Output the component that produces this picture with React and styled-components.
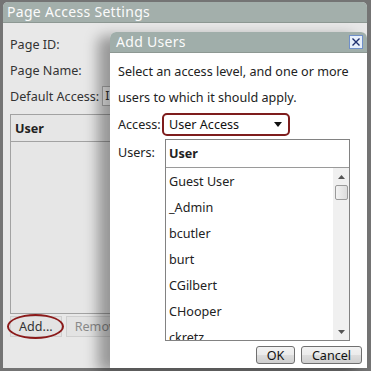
import React from "react";
import styled, { createGlobalStyle } from "styled-components";

const Global = createGlobalStyle`
  html, body { margin: 0; padding: 0; background: #747474; }
  body { font-family: "Noto Sans", "Open Sans", sans-serif; }
`;

const Frame = styled.div`
  position: relative;
  width: 371px;
  height: 371px;
  box-sizing: border-box;
  background: #747474;
  padding: 2px 4px 3px 3px;
`;

const Window = styled.div`
  height: 100%;
  display: flex;
  flex-direction: column;
  border-radius: 5px 5px 0 0;
  overflow: hidden;
  background: #e8e8e8;
`;

const TitleBar = styled.div`
  height: 20px;
  flex: none;
  background: ${(p) => p.$bg || "#a3afab"};
  color: #fbfbfb;
  font-size: 14px;
  line-height: 20px;
  padding-left: ${(p) => p.$pad || 4}px;
  letter-spacing: 0.3px;
  border-bottom: 1px solid #8d9893;
  display: flex;
  align-items: center;
  justify-content: space-between;
`;

const Body = styled.div`
  flex: 1;
  display: flex;
  flex-direction: column;
  padding: 8px 0 0 7px;
  color: #333;
  font-size: 12.6px;
`;

const FieldRow = styled.div`
  height: 26px;
  display: flex;
  align-items: center;
  gap: 3px;
`;

const FieldBox = styled.div`
  height: 20px;
  width: 14px;
  box-sizing: border-box;
  border: 1px solid #b5b5b5;
  border-right: none;
  background: #fff;
  padding-left: 2px;
  line-height: 18px;
  overflow: hidden;
  white-space: nowrap;
`;

const Table = styled.div`
  margin: 5px 0 0 0;
  width: 200px;
  height: 200px;
  box-sizing: border-box;
  border: 1px solid #a2a2a2;
  background: #e6e6e6;
`;

const TableHead = styled.div`
  height: 26px;
  border-bottom: 1px solid #a2a2a2;
  font-weight: bold;
  display: flex;
  align-items: center;
  padding-left: 4px;
  color: #222;
`;

const ButtonRow = styled.div`
  display: flex;
  gap: 4px;
  margin-top: 2px;
`;

const GrayButton = styled.div`
  position: relative;
  height: 21px;
  padding: 0 8px;
  box-sizing: border-box;
  border: 1px solid #cfcfcf;
  background: #e3e3e3;
  color: ${(p) => (p.$disabled ? "#8a8a8a" : "#333")};
  line-height: 19px;
  white-space: nowrap;
`;

const Ellipse = styled.div`
  position: absolute;
  left: -4px;
  top: -3px;
  right: -3px;
  bottom: -3px;
  border: 2px solid #8b1a1a;
  border-radius: 50%;
`;

const Dialog = styled.div`
  position: absolute;
  left: 110px;
  top: 32px;
  width: 257px;
  height: 336px;
  display: flex;
  flex-direction: column;
  border-radius: 6px 6px 0 0;
  overflow: hidden;
  background: #fff;
  box-shadow: -12px 4px 14px rgba(0, 0, 0, 0.35);
`;

const CloseBtn = styled.div`
  width: 12px;
  height: 12px;
  margin-right: 4px;
  border: 1px solid #6f8fc9;
  background: #e8f0fb;
  display: flex;
  align-items: center;
  justify-content: center;
`;

const DlgBody = styled.div`
  flex: 1;
  padding: 6px 0 0 8px;
  font-size: 12.6px;
  color: #222;
  display: flex;
  flex-direction: column;
`;

const Para = styled.div`
  line-height: 26px;
`;

const FormRow = styled.div`
  display: flex;
  align-items: ${(p) => p.$align || "center"};
  margin-top: ${(p) => p.$mt || 0}px;
`;

const Label = styled.div`
  width: ${(p) => p.$w}px;
  flex: none;
  padding-top: ${(p) => p.$pt || 0}px;
`;

const Select = styled.div`
  width: 128px;
  height: 23px;
  box-sizing: border-box;
  border: 2px solid #7e1d1d;
  border-radius: 5px;
  display: flex;
  align-items: center;
  justify-content: space-between;
  padding: 0 6px 0 5px;
  color: #111;
`;

const ListBox = styled.div`
  width: 185px;
  height: 202px;
  box-sizing: border-box;
  border: 1px solid #828282;
  display: flex;
  flex-direction: column;
  overflow: hidden;
`;

const ListHead = styled.div`
  height: 27px;
  flex: none;
  border-bottom: 1px solid #9a9a9a;
  font-weight: bold;
  padding-left: 3px;
  display: flex;
  align-items: center;
`;

const ListMain = styled.div`
  flex: 1;
  display: flex;
  overflow: hidden;
`;

const Items = styled.div`
  flex: 1;
  padding-top: 1px;
`;

const Item = styled.div`
  height: 26px;
  line-height: 26px;
  padding-left: 3px;
  white-space: nowrap;
`;

const ScrollBar = styled.div`
  width: 16px;
  flex: none;
  background: #f0f0f0;
  display: flex;
  flex-direction: column;
  align-items: center;
`;

const Arrow = styled.div`
  height: 17px;
  display: flex;
  align-items: center;
  justify-content: center;
`;

const Thumb = styled.div`
  width: 13px;
  height: 15px;
  box-sizing: border-box;
  border: 1px solid #9a9a9a;
  border-radius: 2px;
  background: linear-gradient(to right, #f3f3f3, #dcdcdc);
`;

const Spacer = styled.div`
  flex: 1;
`;

const DlgButtons = styled.div`
  display: flex;
  justify-content: flex-end;
  gap: 6px;
  padding: 5px 5px 0 0;
`;

const WinButton = styled.div`
  width: ${(p) => p.$w}px;
  height: 18px;
  box-sizing: border-box;
  border: 1px solid #707070;
  border-radius: 3px;
  background: linear-gradient(#f2f2f2 0%, #ebebeb 50%, #dddddd 51%, #cfcfcf 100%);
  display: flex;
  align-items: center;
  justify-content: center;
  color: #111;
`;

const users = ["Guest User", "_Admin", "bcutler", "burt", "CGilbert", "CHooper", "ckretz"];

export default function App() {
  return (
    <>
      <Global />
      <Frame>
        <Window>
          <TitleBar>Page Access Settings</TitleBar>
          <Body>
            <FieldRow>Page ID:</FieldRow>
            <FieldRow>Page Name:</FieldRow>
            <FieldRow>
              Default Access:<FieldBox>Inherit</FieldBox>
            </FieldRow>
            <Table>
              <TableHead>User</TableHead>
            </Table>
            <ButtonRow>
              <GrayButton>
                Add...
                <Ellipse />
              </GrayButton>
              <GrayButton $disabled>Remove</GrayButton>
            </ButtonRow>
          </Body>
        </Window>
        <Dialog>
          <TitleBar $bg="#a0aeaa" $pad={6}>
            Add Users
            <CloseBtn>
              <svg width="10" height="10" viewBox="0 0 10 10">
                <path d="M1.5 1.5 L8.5 8.5 M8.5 1.5 L1.5 8.5" stroke="#1e2f6e" strokeWidth="1.4" />
              </svg>
            </CloseBtn>
          </TitleBar>
          <DlgBody>
            <Para>
              Select an access level, and one or more
              <br />
              users to which it should apply.
            </Para>
            <FormRow $mt={2}>
              <Label $w={44}>Access:</Label>
              <Select>
                User Access
                <svg width="8" height="5" viewBox="0 0 8 5">
                  <path d="M0 0 H8 L4 5 Z" fill="#111" />
                </svg>
              </Select>
            </FormRow>
            <FormRow $align="flex-start" $mt={3}>
              <Label $w={47} $pt={5}>Users:</Label>
              <ListBox>
                <ListHead>User</ListHead>
                <ListMain>
                  <Items>
                    {users.map((u) => (
                      <Item key={u}>{u}</Item>
                    ))}
                  </Items>
                  <ScrollBar>
                    <Arrow>
                      <svg width="7" height="4" viewBox="0 0 7 4">
                        <path d="M0 4 H7 L3.5 0 Z" fill="#555" />
                      </svg>
                    </Arrow>
                    <Thumb />
                    <Spacer />
                    <Arrow>
                      <svg width="7" height="4" viewBox="0 0 7 4">
                        <path d="M0 0 H7 L3.5 4 Z" fill="#555" />
                      </svg>
                    </Arrow>
                  </ScrollBar>
                </ListMain>
              </ListBox>
            </FormRow>
            <DlgButtons>
              <WinButton $w={39}>OK</WinButton>
              <WinButton $w={61}>Cancel</WinButton>
            </DlgButtons>
          </DlgBody>
        </Dialog>
      </Frame>
    </>
  );
}
